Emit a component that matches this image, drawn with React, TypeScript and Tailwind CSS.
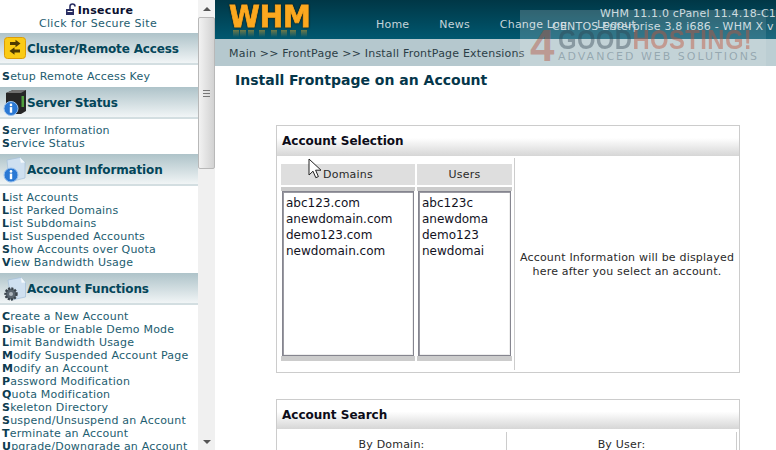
import React from "react";

const font = { fontFamily: '"DejaVu Sans", Verdana, sans-serif' };

function InfoBall({ x, y, r }: { x: number; y: number; r: number }) {
  return (
    <g>
      <circle cx={x + r} cy={y + r} r={r} fill="#2a78d4" stroke="#9cc3ee" strokeWidth="1" />
      <circle cx={x + r} cy={y + r - 3.6} r="1.3" fill="#fff" />
      <rect x={x + r - 1.2} y={y + r - 1.4} width="2.4" height="5.6" fill="#fff" />
    </g>
  );
}

function ClusterIcon() {
  return (
    <svg width="24" height="24" viewBox="0 0 24 24">
      <rect x="1.5" y="0.5" width="21" height="21" rx="3" fill="#fbcb14" stroke="#dc9c08" />
      <path d="M7 5h5.500V2.800l5 3.700-5 3.700V8H7z" fill="#4d3900" />
      <path d="M17 12.500h-5.500v-2.200l-5 3.700 5 3.700V15.500H17z" fill="#4d3900" />
    </svg>
  );
}

function ServerIcon() {
  return (
    <svg width="24" height="28" viewBox="0 0 24 28">
      <path d="M3 4l7-3h13v21l-5 3H3z" fill="#262626" />
      <path d="M3 4l7-3h13l-5 3z" fill="#6f6f6f" />
      <rect x="18.500" y="7" width="2.500" height="11" fill="#4f9f3c" />
      <InfoBall x={1} y={12.500} r={7} />
    </svg>
  );
}

function DocInfoIcon() {
  return (
    <svg width="24" height="28" viewBox="0 0 24 28">
      <path d="M4 4l13-2.500 5 5V22L6 26z" fill="#cfe0f0" stroke="#a3bfd8" strokeWidth="0.7" />
      <path d="M17 1.500l.8 5.300 4.200-.3z" fill="#f5fafd" />
      <InfoBall x={1} y={12} r={7} />
    </svg>
  );
}

function DocGearIcon() {
  return (
    <svg width="24" height="28" viewBox="0 0 24 28">
      <path d="M5 5l13-2.500 4.500 5V22L8 25z" fill="#cfe0f0" stroke="#a3bfd8" strokeWidth="0.7" />
      <path d="M18 2.500l.6 5.300 3.900-.3z" fill="#f5fafd" />
      <circle cx="8" cy="19" r="5.500" fill="#59646e" stroke="#39424a" strokeWidth="2.400" strokeDasharray="2 1.200" />
      <circle cx="8" cy="19" r="2" fill="#aeb6bd" />
    </svg>
  );
}

function SectionHeader({ icon, title }: { icon: React.ReactNode; title: string }) {
  return (
    <div className="flex h-[32px] w-[198px] items-center border-b-2 border-[#d3dee1] bg-gradient-to-b from-[#aec3c9] to-[#f1f5f6]">
      <div className="flex w-[27px] shrink-0 justify-center pl-[2px] pt-[2px]">{icon}</div>
      <span className="pt-[2px] text-[12px] font-bold leading-none tracking-[-0.15px] text-[#04465a]">{title}</span>
    </div>
  );
}

function NavLink({ text }: { text: string }) {
  return (
    <div className="h-[13px] whitespace-nowrap pl-[2px] text-[11px] leading-[13px] tracking-[0.2px] text-[#1d5d70]">
      <span className="font-bold text-[#0d3c50]">{text[0]}</span>
      {text.slice(1)}
    </div>
  );
}

function Section({ icon, title, links, pad }: { icon: React.ReactNode; title: string; links: string[]; pad: string }) {
  return (
    <div>
      <SectionHeader icon={icon} title={title} />
      <div className={pad}>
        {links.map((l) => (
          <NavLink key={l} text={l} />
        ))}
      </div>
    </div>
  );
}

function Scrollbar() {
  return (
    <div className="flex h-[450px] w-[17px] shrink-0 flex-col bg-[#f0f0f0]">
      <div className="flex h-[17px] items-center justify-center bg-[#f3f3f3]">
        <div className="h-0 w-0 border-x-[4px] border-b-[4px] border-x-transparent border-b-[#555]" />
      </div>
      <div className="flex h-[152px] flex-col items-center justify-center rounded-[2px] border border-[#b8b8b8] bg-gradient-to-r from-[#f2f2f2] to-[#d2d2d2]">
        <div className="h-[7px] w-[7px] border-y border-[#777]">
          <div className="mt-[2px] h-px bg-[#777]" />
        </div>
      </div>
      <div className="flex-1" />
      <div className="flex h-[17px] items-center justify-center">
        <div className="h-0 w-0 border-x-[4px] border-t-[4px] border-x-transparent border-t-[#555]" />
      </div>
    </div>
  );
}

function Sidebar() {
  return (
    <div className="flex h-[450px] w-[215px] shrink-0 overflow-hidden">
      <div className="w-[198px] shrink-0 overflow-hidden">
        <div className="flex h-[33px] flex-col items-center pt-[3px]">
          <div className="flex h-[14px] items-center text-[11px] font-bold leading-none tracking-[0.3px] text-[#0b1030]">
            <svg width="13" height="13" viewBox="0 0 13 13" className="mb-[1px]">
              <path d="M5 6V3.500a2.500 2.500 0 0 1 5 0" fill="none" stroke="#2b2f63" strokeWidth="1.600" />
              <rect x="1" y="6" width="8" height="6" fill="#2b2f63" />
              <rect x="2.500" y="8" width="5" height="1" fill="#fff" />
            </svg>
            Insecure
          </div>
          <div className="pr-[2px] text-[11px] leading-[13px] tracking-[0.35px] text-[#1d5d70]">Click for Secure Site</div>
        </div>
        <Section icon={<ClusterIcon />} title="Cluster/Remote Access" links={["Setup Remote Access Key"]} pad="h-[22px] pt-[5px]" />
        <Section icon={<ServerIcon />} title="Server Status" links={["Server Information", "Service Status"]} pad="h-[35px] pt-[5px]" />
        <Section
          icon={<DocInfoIcon />}
          title="Account Information"
          links={["List Accounts", "List Parked Domains", "List Subdomains", "List Suspended Accounts", "Show Accounts over Quota", "View Bandwidth Usage"]}
          pad="h-[87px] pt-[5px]"
        />
        <Section
          icon={<DocGearIcon />}
          title="Account Functions"
          links={[
            "Create a New Account",
            "Disable or Enable Demo Mode",
            "Limit Bandwidth Usage",
            "Modify Suspended Account Page",
            "Modify an Account",
            "Password Modification",
            "Quota Modification",
            "Skeleton Directory",
            "Suspend/Unsuspend an Account",
            "Terminate an Account",
            "Upgrade/Downgrade an Account",
          ]}
          pad="pt-[5px]"
        />
      </div>
      <Scrollbar />
    </div>
  );
}

function WhmLogo() {
  return (
    <div className="relative w-[161px] shrink-0 pl-[14px] pt-[1px]">
      <div
        className="origin-left scale-x-[0.93] text-[30px] font-bold leading-[32px] text-[#fba81f] [-webkit-text-stroke:0.8px_#fba81f] [filter:drop-shadow(0_0_1px_#140e00)]"
        style={font}
      >
        WHM
      </div>
      <svg className="absolute left-[16px] top-[30px]" width="82" height="7" viewBox="0 0 82 7">
        <defs>
          <linearGradient id="refl" x1="0" y1="0" x2="0" y2="1">
            <stop offset="0" stopColor="#c89a30" stopOpacity="0.55" />
            <stop offset="1" stopColor="#c89a30" stopOpacity="0" />
          </linearGradient>
        </defs>
        {[2, 9, 17, 28, 40, 50, 59, 70].map((x) => (
          <rect key={x} x={x} y="0" width="6" height="7" fill="url(#refl)" />
        ))}
      </svg>
    </div>
  );
}

function TopBar() {
  return (
    <div className="flex h-[39px] bg-gradient-to-b from-[#003746] to-[#005870]">
      <WhmLogo />
      <div className="flex gap-[30px] whitespace-nowrap pt-[18px] text-[11px] leading-[13px] tracking-[0.2px] text-[#c4d4da]">
        <span>Home</span>
        <span>News</span>
        <span>Change Log</span>
        <span>Logout</span>
      </div>
    </div>
  );
}

function Watermark() {
  const display = { fontFamily: '"Liberation Sans", sans-serif' };
  return (
    <div className="absolute left-[520px] top-[10px] h-[56px] w-[256px] overflow-hidden bg-white/10">
      <div className="flex h-full w-[246px] bg-white/10 pl-[10px] pt-[17px]">
        <div className="w-[28px] shrink-0 text-[44px] font-bold leading-[38px] text-[#b4523c]/45" style={display}>4</div>
        <div className="flex flex-col">
          <div className="h-[24px] origin-left scale-x-[0.85] whitespace-nowrap text-[28px] font-bold leading-[26px] tracking-[0.5px]" style={display}>
            <span className="text-[#2f4450]/40">GOOD</span>
            <span className="text-[#c0553c]/45">HOSTING!</span>
          </div>
          <div className="whitespace-nowrap text-[11px] leading-[12px] tracking-[2px] text-[#5c7280]/45">ADVANCED WEB SOLUTIONS</div>
        </div>
      </div>
    </div>
  );
}

function Cursor() {
  return (
    <svg className="absolute left-[308px] top-[158px]" width="14" height="22" viewBox="0 0 14 22">
      <path d="M1 1v16l4-3.800 2.800 6.500 2.600-1.100-2.800-6.400h5.400z" fill="#fff" stroke="#222" strokeWidth="1" />
    </svg>
  );
}

function PanelTitle({ children, height }: { children: React.ReactNode; height: string }) {
  return (
    <div className={`flex items-center bg-gradient-to-b from-white from-40% to-[#d6d6d6] px-[5px] text-[12px] font-bold leading-none text-[#0c0c18] ${height}`}>
      {children}
    </div>
  );
}

function ListColumn({ title, items, width }: { title: string; items: string[]; width: string }) {
  return (
    <div className={`flex flex-col ${width}`}>
      <div className="flex h-[21px] items-center justify-center bg-[#dedede] pt-[2px] text-[11px] tracking-[0.2px] text-[#2a2a2a]">{title}</div>
      <div className="mt-[2px] h-[174px] border-b-[5px] border-t-[4px] border-[#cccccc]">
        <div className="mx-[1px] h-full overflow-hidden border border-[#85858f] bg-white pl-[3px] pt-[3px] text-[12px] leading-[16px] text-[#12121e] shadow-[inset_1px_1px_0_#9a9aa2,inset_-1px_-1px_0_#eeeeee]">
          {items.map((i) => (
            <div key={i} className="whitespace-nowrap">{i}</div>
          ))}
        </div>
      </div>
    </div>
  );
}

function Main() {
  return (
    <div className="relative h-[450px] flex-1 overflow-hidden">
      <TopBar />
      <div className="h-[27px] whitespace-nowrap bg-[#b5c8ce] pl-[14px] pt-[8px] text-[11px] leading-[13px] tracking-[0.2px] text-[#2c3e46]">
        Main &gt;&gt; FrontPage &gt;&gt; Install FrontPage Extensions
      </div>
      <h1 className="pl-[20px] pt-[6px] text-[14px] font-bold leading-[17px] text-[#04364a]">Install Frontpage on an Account</h1>

      <div className="ml-[61px] mt-[36px] h-[248px] w-[464px] border border-[#cccccc]">
        <PanelTitle height="h-[30px]">Account Selection</PanelTitle>
        <div className="flex h-[216px]">
          <div className="flex w-[237px] shrink-0 gap-[2px] pl-[4px] pt-[8px]">
            <ListColumn title="Domains" width="w-[134px]" items={["abc123.com", "anewdomain.com", "demo123.com", "newdomain.com"]} />
            <ListColumn title="Users" width="w-[95px]" items={["abc123c", "anewdoma", "demo123", "newdomai"]} />
          </div>
          <div className="my-[2px] flex flex-1 items-center justify-center border-l border-[#cccccc] pt-[2px] text-center text-[11px] leading-[14px] tracking-[0.2px] text-[#2a2a2a]">
            <div>Account Information will be displayed<br />here after you select an account.</div>
          </div>
        </div>
      </div>

      <div className="ml-[61px] mt-[26px] h-[60px] w-[464px] border border-[#cccccc]">
        <PanelTitle height="h-[29px]">Account Search</PanelTitle>
        <div className="flex pt-[3px] text-[11px] leading-[13px] tracking-[0.2px] text-[#2a2a2a]">
          <div className="flex h-[30px] w-[230px] justify-center border-r border-[#cccccc] pt-[6px]">By Domain:</div>
          <div className="flex h-[30px] w-[230px] justify-center border-r border-[#cccccc] pt-[6px]">By User:</div>
        </div>
      </div>
    </div>
  );
}

export default function App() {
  return (
    <div className="relative flex h-[450px] w-[776px] overflow-hidden bg-white" style={font}>
      <Sidebar />
      <Main />
      <div className="absolute left-[600px] top-[7px] whitespace-nowrap text-[11px] leading-[14px] tracking-[0.2px] text-[#c4d4da]">WHM 11.1.0 cPanel 11.4.18-C1</div>
      <div className="absolute left-[552px] top-[20px] whitespace-nowrap text-[11px] leading-[14px] tracking-[0.2px] text-[#c4d4da]">CENTOS Enterprise 3.8 i686 - WHM X v</div>
      <Watermark />
      <Cursor />
    </div>
  );
}
